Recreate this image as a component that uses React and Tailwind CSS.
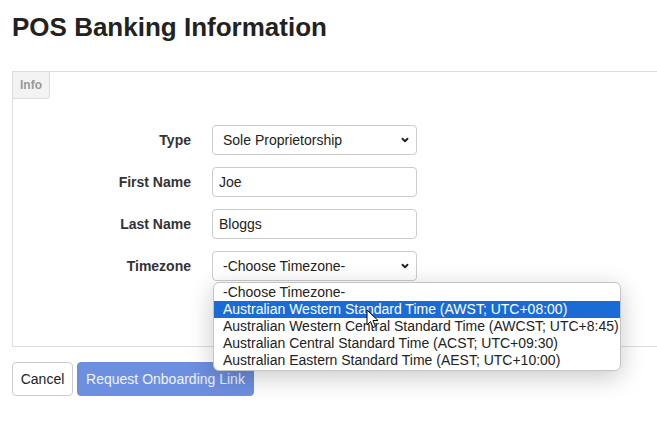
import { ChevronDown } from "lucide-react";

const TIMEZONES = [
  "-Choose Timezone-",
  "Australian Western Standard Time (AWST; UTC+08:00)",
  "Australian Western Central Standard Time (AWCST; UTC+8:45)",
  "Australian Central Standard Time (ACST; UTC+09:30)",
  "Australian Eastern Standard Time (AEST; UTC+10:00)",
];

function Row({ label, children }) {
  return (
    <div className="flex items-center">
      <label className="w-[178px] text-right text-[14px] font-bold text-[#333]">{label}</label>
      <div className="relative ml-[21px] w-[205px]">{children}</div>
    </div>
  );
}

function SelectBox({ value }) {
  return (
    <>
      <div className="flex h-[30px] items-center rounded-[4px] border border-[#ccc] bg-white pl-[10px] text-[14px] text-[#222]">
        {value}
      </div>
      <ChevronDown className="absolute right-[7px] top-[10px] h-[10px] w-[10px] text-[#222]" strokeWidth={4.5} />
    </>
  );
}

function TextBox({ value }) {
  return (
    <input
      readOnly
      value={value}
      className="h-[30px] w-full rounded-[4px] border border-[#ccc] bg-white px-[6px] text-[14px] text-[#222] outline-none"
    />
  );
}

function Cursor() {
  return (
    <svg className="absolute left-[152px] top-[26px] h-[20px] w-[13px]" viewBox="0 0 13 20">
      <path d="M1 1 L1 16 L4.5 12.5 L7 18.5 L9.5 17.5 L7 11.5 L12 11.5 Z" fill="white" stroke="black" strokeWidth="1" strokeLinejoin="round" />
    </svg>
  );
}

export default function App() {
  return (
    <div className="h-[442px] w-[657px] overflow-hidden bg-white font-['Liberation_Sans',Arial,sans-serif] text-[#333]">
      <div className="pl-3">
        <h1 className="mt-[11px] text-[26px] font-bold leading-8 text-[#222]">POS Banking Information</h1>

        {/* Info panel */}
        <div className="mt-[28px] w-[700px] border border-[#ddd] bg-white">
          <div className="flex h-[27px] w-[37px] items-center justify-center rounded-br-[4px] border-b border-r border-[#ddd] bg-[#f3f3f3] text-[12px] font-bold text-[#999]">
            Info
          </div>
          <div className="flex flex-col gap-3 pb-[65px] pt-[26px]">
            <Row label="Type">
              <SelectBox value="Sole Proprietorship" />
            </Row>
            <Row label="First Name">
              <TextBox value="Joe" />
            </Row>
            <Row label="Last Name">
              <TextBox value="Bloggs" />
            </Row>
            <Row label="Timezone">
              <SelectBox value="-Choose Timezone-" />
              {/* open dropdown list */}
              <div className="absolute left-[1px] top-[31px] z-10 w-[408px] overflow-hidden rounded-[6px] border border-[#c4c4c4] bg-white py-[1px] shadow-[0_6px_24px_rgba(0,0,0,0.22)]">
                {TIMEZONES.map((tz, i) => (
                  <div
                    key={tz}
                    className={
                      "h-[17px] whitespace-nowrap pl-[9px] text-[14px] leading-[17px] " +
                      (i === 1 ? "bg-[#1a6bd6] text-white" : "text-[#222]")
                    }
                  >
                    {tz}
                  </div>
                ))}
                <Cursor />
              </div>
            </Row>
          </div>
        </div>

        <div className="mt-[15px] flex gap-1">
          <button className="h-[34px] w-[61px] rounded-[4px] border border-[#ccc] bg-white text-[14px] text-[#222]">Cancel</button>
          <button className="h-[34px] w-[177px] rounded-[4px] border border-[#6d8de0] bg-[#6d8fe0] text-[14px] text-white/90">
            Request Onboarding Link
          </button>
        </div>
      </div>
    </div>
  );
}
